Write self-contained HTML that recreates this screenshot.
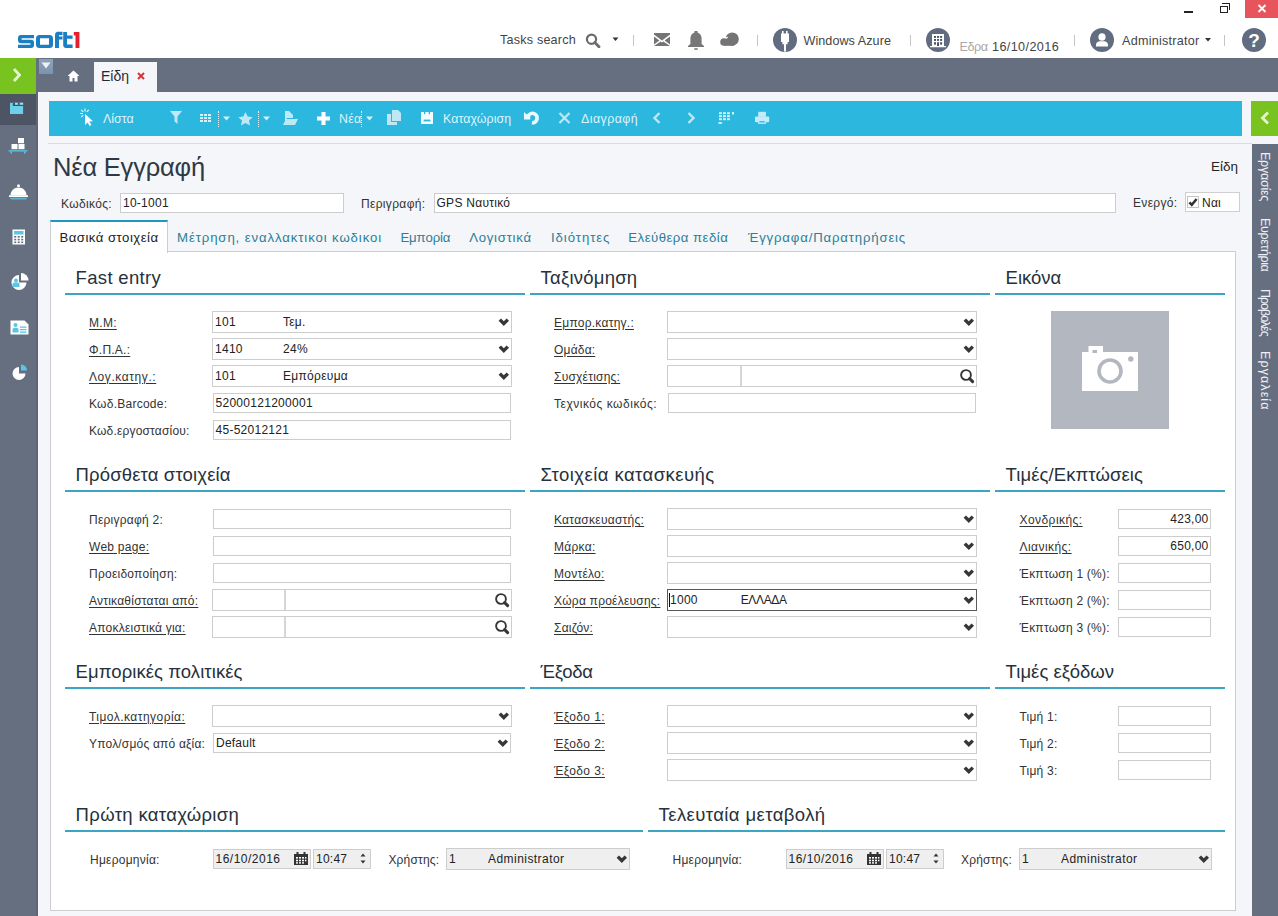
<!DOCTYPE html>
<html><head><meta charset="utf-8">
<style>
*{box-sizing:border-box;margin:0;padding:0}
html,body{width:1278px;height:916px;overflow:hidden;background:#fff;font-family:"Liberation Sans",sans-serif;color:#333;position:relative}
.a{position:absolute}
.t{position:absolute;white-space:nowrap;line-height:1}
.slate{background:#666f80}
.hdr{font-size:12.6px;color:#444}
.sep{position:absolute;width:1px;height:11px;top:35px;background:#c4c4c4}
.circ{position:absolute;width:24px;height:24px;border-radius:50%;background:#626c80;top:28px}
.tb{color:#dff3fa;font-size:12.4px}
.lbl{position:absolute;white-space:nowrap;line-height:1;font-size:12.5px;color:#333}
.u{text-decoration:underline;text-underline-offset:2px}
.inp{position:absolute;height:20px;border:1px solid #cfcfcf;background:#fff}
.sel{position:absolute;height:22px;border:1px solid #cfcfcf;background:#fff}
.val{position:absolute;white-space:nowrap;line-height:1;font-size:12.5px;color:#222}
.h2{position:absolute;white-space:nowrap;line-height:1;font-size:18px;color:#1f2a36}
.ul{position:absolute;height:2px;background:#3aa6c2}
.tab{position:absolute;white-space:nowrap;line-height:1;font-size:13.6px;color:#2b8cb0}
</style></head><body>

<!-- header -->
<svg class="a" style="left:17px;top:31px" width="64" height="18" viewBox="0 0 64 18">
<g fill="#1b7fc3">
<path d="M3 4h14v3.2H4.6v1.6H14a3 3 0 0 1 3 3V14a3 3 0 0 1-3 3H1v-3.2h12.4v-1.6H4a3 3 0 0 1-3-3V7a3 3 0 0 1 3-3z"/>
<path d="M22.5 4h10a3.5 3.5 0 0 1 3.5 3.5v6A3.5 3.5 0 0 1 32.5 17h-10A3.5 3.5 0 0 1 19 13.5v-6A3.5 3.5 0 0 1 22.5 4zM23 7.3v6.4h9V7.3z"/>
<path d="M40 0.8h5.5v3.2H42v1.4h3.5v3H42V17h-4V4A3.2 3.2 0 0 1 40 0.8z"/>
<path d="M46.2 1h3.8v3.6h5.6v3.1H50v5.8h5.6V17h-6.4a3 3 0 0 1-3-3z"/>
</g>
<path fill="#e3202b" d="M56.8 1h5.6V17h-3.9V4.4h-1.7z"/>
</svg>
<!-- window controls -->
<div class="a" style="left:1184px;top:11px;width:9px;height:2px;background:#222"></div>
<div class="a" style="left:1220px;top:6px;width:8px;height:7px;border:1px solid #222"></div>
<div class="a" style="left:1222px;top:3px;width:8px;height:7px;border-top:1px solid #222;border-right:1px solid #222"></div>
<div class="a" style="left:1245px;top:0;width:33px;height:18px;background:#e8545c"></div>
<svg class="a" style="left:1257px;top:4px" width="10" height="9" viewBox="0 0 10 9"><path d="M1.5 1l7 7M8.5 1l-7 7" stroke="#fff" stroke-width="1.8"/></svg>
<!-- header right -->
<div class="t hdr" style="left:500px;top:33.6px;letter-spacing:0.2px">Tasks search</div>
<svg class="a" style="left:585px;top:33px" width="16" height="15" viewBox="0 0 16 15"><circle cx="6.5" cy="6.3" r="4.6" fill="none" stroke="#6b6b6b" stroke-width="2.2"/><path d="M9.8 9.6l4.2 4.2" stroke="#6b6b6b" stroke-width="2.8" stroke-linecap="round"/></svg>
<svg class="a" style="left:612px;top:37px" width="7" height="5" viewBox="0 0 7 5"><path d="M0.5 0.5h6L3.5 4z" fill="#333"/></svg>
<div class="sep" style="left:633px"></div>
<svg class="a" style="left:654px;top:33px" width="16" height="13" viewBox="0 0 16 13"><path d="M0 0h16v1.6L8 7.6 0 1.6z M0 3.4l5.4 4.1L0 11.4z M16 3.4l-5.4 4.1L16 11.4z M0 13l6.6-4.6L8 9.4l1.4-1L16 13z" fill="#747474"/></svg>
<svg class="a" style="left:687px;top:31px" width="18" height="19" viewBox="0 0 18 19"><path d="M9 1.5c-3.6 0-5.6 2.5-5.6 6.5v5L1 15v1h16v-1l-2.4-2V8c0-4-2-6.5-5.6-6.5z" fill="#777"/><rect x="7.2" y="0" width="3.6" height="2" rx="1" fill="#777"/><rect x="7" y="17.3" width="4" height="1.5" rx="0.7" fill="#777"/></svg>
<svg class="a" style="left:719px;top:32px" width="22" height="15" viewBox="0 0 22 15"><g fill="#747474"><circle cx="13.2" cy="7" r="6.6"/><circle cx="5" cy="10" r="3.8"/><rect x="5" y="8" width="10" height="5.8"/></g><path d="M6.6 6.5a4 4 0 0 1 2.2-1.2" stroke="#fff" stroke-width="1.2" fill="none"/></svg>
<div class="sep" style="left:757px"></div>
<div class="circ" style="left:773px"></div>
<svg class="a" style="left:773px;top:28px" width="24" height="24" viewBox="0 0 24 24"><path fill="#fff" d="M9 3h1.6v2.5h2.4V3h1.6v2.5H16V14h-1.4v2.3H13V23.5h-2V16.3H9.4V14H8V5.5h1z"/></svg>
<div class="t hdr" style="left:803.5px;top:34.5px;letter-spacing:0.05px">Windows Azure</div>
<div class="sep" style="left:910px"></div>
<div class="circ" style="left:926px"></div>
<svg class="a" style="left:926px;top:28px" width="24" height="24" viewBox="0 0 24 24"><path fill="#fff" d="M6 6h12v12h1.9v1.2H4.1V18H6z"/><g fill="#4a5366"><rect x="8" y="8" width="2" height="1.9"/><rect x="11.05" y="8" width="2" height="1.9"/><rect x="14.1" y="8" width="2" height="1.9"/><rect x="8" y="11" width="2" height="1.9"/><rect x="11.05" y="11" width="2" height="1.9"/><rect x="14.1" y="11" width="2" height="1.9"/><rect x="8" y="14.2" width="2" height="2.4"/><rect x="11.05" y="14.2" width="2" height="3.8"/><rect x="14.1" y="14.2" width="2" height="2.4"/></g></svg>
<div class="t hdr" style="left:959.5px;top:40.5px;color:#a9a9a9;letter-spacing:-0.4px">Εδρα</div>
<div class="t hdr" style="left:992px;top:40.5px;letter-spacing:0.4px">16/10/2016</div>
<div class="sep" style="left:1074px"></div>
<div class="circ" style="left:1090px"></div>
<svg class="a" style="left:1090px;top:28px" width="24" height="24" viewBox="0 0 24 24"><path fill="#fff" d="M12 5.2a3.6 3.8 0 1 1 0 7.6 3.6 3.8 0 1 1 0-7.6zM6 18.5v-1.6c0-2.4 2-3.6 3.8-3.6h4.4c1.8 0 3.8 1.2 3.8 3.6v1.6z"/></svg>
<div class="t hdr" style="left:1122px;top:34.5px;letter-spacing:0.25px">Administrator</div>
<svg class="a" style="left:1205px;top:38px" width="6" height="4" viewBox="0 0 6 4"><path d="M0 0h6L3 3.5z" fill="#333"/></svg>
<div class="sep" style="left:1224px"></div>
<div class="circ" style="left:1242px"></div>
<div class="t" style="left:1247px;top:31px;width:14px;text-align:center;font-size:19px;font-weight:bold;color:#fff">?</div>

<!-- slate bar -->
<div class="a slate" style="left:0;top:58px;width:1278px;height:34px"></div>
<div class="a slate" style="left:0;top:58px;width:38px;height:858px"></div>
<div class="a" style="left:36px;top:92px;width:2px;height:824px;background:#5d6576"></div>
<div class="a" style="left:0;top:58px;width:36px;height:36px;background:#78c31f"></div>
<div class="a" style="left:0;top:94px;width:36px;height:31px;background:#4d5464"></div>
<svg class="a" style="left:9px;top:101px" width="16" height="14" viewBox="0 0 16 14"><rect x="1" y="1.8" width="13.1" height="11.2" fill="#6ccfec"/><rect x="6" y="1.8" width="2.9" height="2" fill="#a8def0"/><rect x="10.7" y="1.8" width="3.4" height="2" fill="#a8def0"/><g fill="#3f5566"><rect x="3.9" y="1.8" width="2.1" height="3.2"/><rect x="8.9" y="1.8" width="1.8" height="2"/><rect x="3.9" y="3.8" width="10.2" height="1.2"/></g></svg>
<svg class="a" style="left:8px;top:138px" width="20" height="17" viewBox="0 0 20 17"><g fill="#fff"><rect x="10" y="0" width="6" height="5.2"/><rect x="3.5" y="6" width="6" height="5.2"/><rect x="10.5" y="6" width="6" height="5.2"/></g><rect x="0.5" y="12.2" width="19" height="1.3" fill="#5ac6e6"/><rect x="2.5" y="13.5" width="1.5" height="2" fill="#5ac6e6"/><rect x="16" y="13.5" width="1.5" height="2" fill="#5ac6e6"/></svg>
<svg class="a" style="left:9px;top:184px" width="19" height="16" viewBox="0 0 19 16"><circle cx="9.5" cy="1.8" r="1.5" fill="#fff"/><path d="M1.5 11.5C1.5 7 5 3.5 9.5 3.5S17.5 7 17.5 11.5z" fill="#fff"/><rect x="0" y="11.3" width="19" height="1.8" fill="#fff"/><rect x="1.5" y="14.2" width="16" height="1.2" fill="#5ac6e6"/></svg>
<svg class="a" style="left:12px;top:229px" width="14" height="16" viewBox="0 0 14 16"><rect x="0.5" y="0.5" width="12.5" height="15" fill="#fff"/><rect x="2" y="2" width="9.5" height="3.5" fill="#5ac6e6"/><g fill="#666f80"><rect x="2.2" y="7" width="2" height="1.6"/><rect x="5.7" y="7" width="2" height="1.6"/><rect x="9.2" y="7" width="2" height="1.6"/><rect x="2.2" y="9.8" width="2" height="1.6"/><rect x="5.7" y="9.8" width="2" height="1.6"/><rect x="9.2" y="9.8" width="2" height="1.6"/><rect x="2.2" y="12.5" width="2" height="1.6"/><rect x="5.7" y="12.5" width="2" height="1.6"/><rect x="9.2" y="12.5" width="2" height="1.6"/></g></svg>
<svg class="a" style="left:11px;top:272px" width="18" height="18" viewBox="0 0 18 18"><path d="M8 3A7.5 7.5 0 1 0 15.5 10.5H8z" fill="#fff"/><path d="M10 1a7.5 7.5 0 0 1 7.5 7.5H10z" fill="#fff"/><circle cx="5" cy="8.5" r="2" fill="#5ac6e6"/><path d="M1.5 15v-2.5c0-1.2 1-2 2-2h3c1 0 2 .8 2 2V15z" fill="#5ac6e6"/></svg>
<svg class="a" style="left:10px;top:320px" width="19" height="15" viewBox="0 0 19 15"><path d="M0.5 0.5h14l4 4v10h-18z" fill="#fff"/><circle cx="5.5" cy="5" r="2" fill="#5ac6e6"/><path d="M2.5 12.5v-3c0-1 1-1.8 2-1.8h2c1 0 2 .8 2 1.8v3z" fill="#5ac6e6"/><rect x="10" y="6.5" width="6.5" height="1.3" fill="#5ac6e6"/><rect x="10" y="9" width="6.5" height="1.3" fill="#5ac6e6"/><rect x="10" y="11.5" width="6.5" height="1.3" fill="#5ac6e6"/></svg>
<svg class="a" style="left:12px;top:363px" width="17" height="17" viewBox="0 0 17 17"><path d="M7 4A6.5 6.5 0 1 0 13.5 10.5H7z" fill="#fff"/><path d="M9 1.5a6 6 0 0 1 6 6H9z" fill="#5ac6e6"/></svg>

<!-- page bg -->
<div class="a" style="left:38px;top:92px;width:1214px;height:824px;background:#f4f6f9"></div>
<div class="a" style="left:1252px;top:92px;width:26px;height:52px;background:#f4f6f9"></div>
<div class="a slate" style="left:1252px;top:144px;width:26px;height:772px"></div>

<!-- tab -->
<div class="a" style="left:94px;top:62px;width:63px;height:30px;background:#f4f6f9"></div>

<!-- toolbar -->
<div class="a" style="left:49px;top:101px;width:1193px;height:35px;background:#2cb7df"></div>
<div class="a" style="left:1251px;top:101px;width:27px;height:35px;background:#78c31f"></div>
<svg class="a" style="left:1259px;top:111px" width="12" height="14" viewBox="0 0 12 14"><path d="M9 1.5L3.5 7 9 12.5" fill="none" stroke="#e6f5d0" stroke-width="2.8"/></svg>
<svg class="a" style="left:11px;top:67px" width="12" height="16" viewBox="0 0 12 16"><path d="M3 2l5.5 6L3 14" fill="none" stroke="#e6f5d0" stroke-width="2.8"/></svg>
<!-- small dropdown square -->
<div class="a" style="left:39px;top:59px;width:14px;height:15px;background:linear-gradient(#8fa3b9,#7b93ad)"></div>
<svg class="a" style="left:41px;top:62px" width="10" height="7" viewBox="0 0 10 7"><path d="M0.5 0.5h9L5 6.5z" fill="#eef2f6"/></svg>
<!-- home icon -->
<svg class="a" style="left:67px;top:70px" width="13" height="12" viewBox="0 0 13 12"><path d="M6.5 0.5L0.5 6h2v5.5h3V8h2v3.5h3V6h2z" fill="#fff"/></svg>
<!-- tab content -->
<div class="t" style="left:101px;top:69px;font-size:14px;color:#1f2a36">Είδη</div>
<svg class="a" style="left:137px;top:72px" width="8" height="8" viewBox="0 0 8 8"><path d="M1 1l6 6M7 1L1 7" stroke="#d8343a" stroke-width="2"/></svg>
<!-- toolbar icons -->
<svg class="a" style="left:79px;top:108px" width="15" height="19" viewBox="0 0 15 19"><g stroke="#e8f7fc" stroke-width="1.2"><path d="M6 0.5v3M1 5.5h3M2.2 1.8l2 2M9.8 1.8l-2 2M2.2 9.2l2-2"/></g><path d="M6 6l0 11 2.6-2.6 2 3.6 1.8-1-2-3.5 3.6-0.3z" fill="#fff"/></svg>
<div class="t tb" style="left:103px;top:113px">Λίστα</div>
<svg class="a" style="left:170px;top:111px" width="12" height="13" viewBox="0 0 12 13"><path d="M0 0h12L7.5 5.5V13L4.5 10.5V5.5z" fill="#bfe8f5"/></svg>
<svg class="a" style="left:200px;top:114px" width="11" height="8" viewBox="0 0 11 8"><g fill="#d8f1f9"><rect x="0" y="0" width="3" height="2"/><rect x="4" y="0" width="3" height="2"/><rect x="8" y="0" width="3" height="2"/><rect x="0" y="3" width="3" height="2"/><rect x="4" y="3" width="3" height="2"/><rect x="8" y="3" width="3" height="2"/><rect x="0" y="6" width="3" height="2"/><rect x="4" y="6" width="3" height="2"/><rect x="8" y="6" width="3" height="2"/></g></svg>
<div class="a" style="left:218px;top:111px;width:1px;height:16px;border-left:1px dotted #e0f4fb"></div>
<svg class="a" style="left:223px;top:116px" width="7" height="5" viewBox="0 0 7 5"><path d="M0 0.5h7L3.5 4.5z" fill="#d8f1f9"/></svg>
<svg class="a" style="left:238px;top:112px" width="15" height="14" viewBox="0 0 15 14"><path d="M7.5 0l2.2 4.6 5 .6-3.7 3.4 1 4.9-4.5-2.5-4.5 2.5 1-4.9L0.3 5.2l5-.6z" fill="#bfe8f5"/></svg>
<div class="a" style="left:258px;top:111px;width:1px;height:16px;border-left:1px dotted #e0f4fb"></div>
<svg class="a" style="left:263px;top:116px" width="7" height="5" viewBox="0 0 7 5"><path d="M0 0.5h7L3.5 4.5z" fill="#d8f1f9"/></svg>
<svg class="a" style="left:283px;top:111px" width="15" height="14" viewBox="0 0 15 14"><path d="M0 0h6l4 4v3H4L2 11V0z" fill="#bfe8f5"/><path d="M0 14l3-6h12l-3 6z" fill="#bfe8f5"/></svg>
<svg class="a" style="left:317px;top:112px" width="13" height="13" viewBox="0 0 13 13"><path d="M4.5 0h4v4.5H13v4H8.5V13h-4V8.5H0v-4h4.5z" fill="#fff"/></svg>
<div class="t tb" style="left:339px;top:113px;letter-spacing:0.3px">Νέα</div>
<div class="a" style="left:361px;top:111px;width:1px;height:16px;border-left:1px dotted #e0f4fb"></div>
<svg class="a" style="left:366px;top:116px" width="7" height="5" viewBox="0 0 7 5"><path d="M0 0.5h7L3.5 4.5z" fill="#d8f1f9"/></svg>
<svg class="a" style="left:387px;top:110px" width="14" height="15" viewBox="0 0 14 15"><path d="M5 0h6l3 3v8H5z" fill="#bfe8f5"/><path d="M0 4h4v8h6v3H0z" fill="#bfe8f5"/></svg>
<svg class="a" style="left:421px;top:112px" width="12" height="12" viewBox="0 0 12 12"><path d="M0 0h12v12H0z" fill="#f2fbfe"/><rect x="3" y="0" width="1.3" height="2.2" fill="#2cb7df"/><rect x="7.7" y="0" width="1.3" height="2.2" fill="#2cb7df"/><rect x="2.6" y="7.6" width="6.8" height="1.8" fill="#2cb7df"/></svg>
<div class="t tb" style="left:443px;top:113px;letter-spacing:0.1px">Καταχώριση</div>
<svg class="a" style="left:518px;top:106px" width="28" height="24" viewBox="0 0 28 24"><path d="M10.3 9.8A4.7 4.7 0 1 1 13.9 16.7" fill="none" stroke="#e8fafd" stroke-width="3.7"/><path d="M6 6l2.8 2.4 3-1.2 0.6 6.4H6z" fill="#e8fafd"/></svg>
<svg class="a" style="left:558px;top:112px" width="13" height="12" viewBox="0 0 13 12"><path d="M1.5 1l10 10M11.5 1l-10 10" stroke="#bfe8f5" stroke-width="2.2"/></svg>
<div class="t tb" style="left:581px;top:113px;letter-spacing:0.45px">Διαγραφή</div>
<svg class="a" style="left:652px;top:112px" width="10" height="12" viewBox="0 0 10 12"><path d="M7.5 1L2.5 6l5 5" fill="none" stroke="#bfe8f5" stroke-width="2.4"/></svg>
<svg class="a" style="left:686px;top:112px" width="10" height="12" viewBox="0 0 10 12"><path d="M2.5 1l5 5-5 5" fill="none" stroke="#bfe8f5" stroke-width="2.4"/></svg>
<svg class="a" style="left:718px;top:111px" width="17" height="14" viewBox="0 0 17 14"><g fill="#d2f0fa"><rect x="1" y="1.2" width="2.9" height="2"/><rect x="5" y="1.2" width="2.9" height="2"/><rect x="9" y="1.2" width="2.9" height="2"/><rect x="1" y="4.2" width="2.9" height="2"/><rect x="5" y="4.2" width="2.9" height="2"/><rect x="9" y="4.2" width="2.9" height="2"/><rect x="1" y="7.2" width="2.9" height="2"/><rect x="5" y="7.2" width="2.9" height="2"/><rect x="9" y="7.2" width="2.9" height="2"/><path d="M14 1h2v2.4h-2z"/><ellipse cx="2.2" cy="12" rx="2.2" ry="1.1"/></g></svg>
<svg class="a" style="left:755px;top:111px" width="15" height="14" viewBox="0 0 15 14"><g fill="#c4ebf7"><rect x="3.2" y="0.8" width="7.7" height="5"/><rect x="0" y="5.6" width="14.2" height="5.6" rx="1"/><rect x="3.2" y="10.5" width="7.7" height="2.4"/></g><rect x="4.3" y="10.2" width="5.5" height="1.3" fill="#2cb7df"/></svg>
<div class="a" style="left:48px;top:143px;width:1204px;height:1px;background:#d9dde2"></div>

<!-- title -->
<div class="t" style="left:53px;top:155px;font-size:25.5px;letter-spacing:-0.2px;color:#2e3945">Νέα Εγγραφή</div>
<div class="t" style="left:1211px;top:160px;font-size:13.5px;color:#222">Είδη</div>

<!-- white panel -->
<div class="a" style="left:50px;top:251px;width:1186px;height:660px;background:#fff;border:1px solid #cbcdd0"></div>

<!--FORM-->
<div class="t" style="font-size:12.0px;color:#333;letter-spacing:0.35px;left:61.0px;top:198.4px;">Κωδικός:</div>
<div class="a" style="left:120px;top:193px;width:224px;height:20px;border:1px solid #cdcdcd;background:#fff"></div>
<div class="t" style="font-size:12.0px;color:#222;letter-spacing:0.26px;left:123.0px;top:197.4px;">10-1001</div>
<div class="t" style="font-size:12.0px;color:#333;letter-spacing:0.34px;left:361.0px;top:198.4px;">Περιγραφή:</div>
<div class="a" style="left:434px;top:193px;width:682px;height:20px;border:1px solid #cdcdcd;background:#fff"></div>
<div class="t" style="font-size:12.0px;color:#222;letter-spacing:0.27px;left:436.5px;top:197.4px;">GPS Ναυτικό</div>
<div class="t" style="font-size:12.0px;color:#333;letter-spacing:0.32px;left:1133.0px;top:197.4px;">Ενεργό:</div>
<div class="a" style="left:1185px;top:192px;width:55px;height:20px;border:1px solid #cfcfcf;background:#fff"></div>
<div class="a" style="left:1187px;top:196px;width:12px;height:12px;border:1px solid #c4c4c4;background:#fff"></div>
<svg class="a" style="left:1188px;top:197px" width="10" height="10" viewBox="0 0 10 10"><path d="M1.4 5.3l2.4 2.6L8.6 2" fill="none" stroke="#333" stroke-width="2.5"/></svg>
<div class="t" style="font-size:12.0px;color:#222;letter-spacing:0.25px;left:1202.0px;top:196.6px;">Ναι</div>
<div class="a" style="left:50px;top:220px;width:118px;height:33px;background:#fff;border-left:1px solid #cbcdd0;border-right:1px solid #cbcdd0;border-top:2px solid #1f97c0"></div>
<div class="t" style="font-size:13.2px;color:#222;letter-spacing:0.47px;left:59.5px;top:231.3px;">Βασικά στοιχεία</div>
<div class="t" style="font-size:13.2px;color:#2a7f98;letter-spacing:0.89px;left:177.0px;top:231.3px;">Μέτρηση, εναλλακτικοι κωδικοι</div>
<div class="t" style="font-size:13.2px;color:#2a7f98;letter-spacing:-0.10px;left:400.4px;top:231.3px;">Εμπορία</div>
<div class="t" style="font-size:13.2px;color:#2a7f98;letter-spacing:0.73px;left:469.2px;top:231.3px;">Λογιστικά</div>
<div class="t" style="font-size:13.2px;color:#2a7f98;letter-spacing:0.92px;left:551.0px;top:231.3px;">Ιδιότητες</div>
<div class="t" style="font-size:13.2px;color:#2a7f98;letter-spacing:0.47px;left:628.3px;top:231.3px;">Ελεύθερα πεδία</div>
<div class="t" style="font-size:13.2px;color:#2a7f98;letter-spacing:0.83px;left:748.0px;top:231.3px;">Έγγραφα/Παρατηρήσεις</div>
<div class="ul" style="left:65px;top:293px;width:460px"></div>
<div class="t" style="font-size:18.5px;color:#26313c;letter-spacing:0.33px;left:75.6px;top:269.4px;">Fast entry</div>
<div class="ul" style="left:530px;top:293px;width:460px"></div>
<div class="t" style="font-size:18.5px;color:#26313c;letter-spacing:0.22px;left:540.6px;top:269.4px;">Ταξινόμηση</div>
<div class="ul" style="left:995px;top:293px;width:230px"></div>
<div class="t" style="font-size:18.5px;color:#26313c;letter-spacing:-0.04px;left:1005.6px;top:269.4px;">Εικόνα</div>
<div class="ul" style="left:65px;top:490px;width:460px"></div>
<div class="t" style="font-size:18.5px;color:#26313c;letter-spacing:0.14px;left:75.6px;top:466.4px;">Πρόσθετα στοιχεία</div>
<div class="ul" style="left:530px;top:490px;width:460px"></div>
<div class="t" style="font-size:18.5px;color:#26313c;letter-spacing:0.44px;left:540.6px;top:466.4px;">Στοιχεία κατασκευής</div>
<div class="ul" style="left:995px;top:490px;width:230px"></div>
<div class="t" style="font-size:18.5px;color:#26313c;letter-spacing:0.08px;left:1005.6px;top:466.4px;">Τιμές/Εκπτώσεις</div>
<div class="ul" style="left:65px;top:687px;width:460px"></div>
<div class="t" style="font-size:18.5px;color:#26313c;letter-spacing:0.07px;left:75.6px;top:663.4px;">Εμπορικές πολιτικές</div>
<div class="ul" style="left:530px;top:687px;width:460px"></div>
<div class="t" style="font-size:18.5px;color:#26313c;letter-spacing:-0.32px;left:540.6px;top:663.4px;">Έξοδα</div>
<div class="ul" style="left:995px;top:687px;width:230px"></div>
<div class="t" style="font-size:18.5px;color:#26313c;letter-spacing:0.04px;left:1005.6px;top:663.4px;">Τιμές εξόδων</div>
<div class="ul" style="left:65px;top:830px;width:578px"></div>
<div class="t" style="font-size:18.5px;color:#26313c;letter-spacing:0.33px;left:75.6px;top:806.4px;">Πρώτη καταχώριση</div>
<div class="ul" style="left:648px;top:830px;width:577px"></div>
<div class="t" style="font-size:18.5px;color:#26313c;letter-spacing:0.41px;left:658.6px;top:806.4px;">Τελευταία μεταβολή</div>
<div class="t u" style="font-size:12.0px;color:#333;letter-spacing:0.28px;left:89.0px;top:316.6px;">Μ.Μ:</div>
<div class="a" style="left:212px;top:311px;width:300px;height:22px;border:1px solid #cdcdcd;background:#fff"></div>
<svg class="a" style="left:498px;top:318px" width="12" height="9" viewBox="0 0 12 9"><path d="M0.6 2.8L3 0.4 5.8 3.2 8.6 0.4 11 2.8 5.8 8z" fill="#373737"/></svg>
<div class="t" style="font-size:12.0px;color:#222;letter-spacing:0.28px;left:215.0px;top:316.4px;">101</div>
<div class="t" style="font-size:12.0px;color:#222;letter-spacing:0.23px;left:283.0px;top:316.4px;">Τεμ.</div>
<div class="t u" style="font-size:12.0px;color:#333;letter-spacing:0.24px;left:89.0px;top:343.6px;">Φ.Π.Α.:</div>
<div class="a" style="left:212px;top:338px;width:300px;height:22px;border:1px solid #cdcdcd;background:#fff"></div>
<svg class="a" style="left:498px;top:345px" width="12" height="9" viewBox="0 0 12 9"><path d="M0.6 2.8L3 0.4 5.8 3.2 8.6 0.4 11 2.8 5.8 8z" fill="#373737"/></svg>
<div class="t" style="font-size:12.0px;color:#222;letter-spacing:0.28px;left:215.0px;top:343.4px;">1410</div>
<div class="t" style="font-size:12.0px;color:#222;letter-spacing:0.33px;left:283.0px;top:343.4px;">24%</div>
<div class="t u" style="font-size:12.0px;color:#333;letter-spacing:0.58px;left:89.0px;top:370.6px;">Λογ.κατηγ.:</div>
<div class="a" style="left:212px;top:365px;width:300px;height:22px;border:1px solid #cdcdcd;background:#fff"></div>
<svg class="a" style="left:498px;top:372px" width="12" height="9" viewBox="0 0 12 9"><path d="M0.6 2.8L3 0.4 5.8 3.2 8.6 0.4 11 2.8 5.8 8z" fill="#373737"/></svg>
<div class="t" style="font-size:12.0px;color:#222;letter-spacing:0.28px;left:215.0px;top:370.4px;">101</div>
<div class="t" style="font-size:12.0px;color:#222;letter-spacing:0.29px;left:283.0px;top:370.4px;">Εμπόρευμα</div>
<div class="t" style="font-size:12.0px;color:#333;letter-spacing:0.25px;left:89.0px;top:397.6px;">Κωδ.Barcode:</div>
<div class="a" style="left:213px;top:393px;width:298px;height:20px;border:1px solid #cdcdcd;background:#fff"></div>
<div class="t" style="font-size:12.0px;color:#222;letter-spacing:0.28px;left:215.5px;top:397.4px;">52000121200001</div>
<div class="t" style="font-size:12.0px;color:#333;letter-spacing:0.18px;left:89.0px;top:424.6px;">Κωδ.εργοστασίου:</div>
<div class="a" style="left:213px;top:420px;width:298px;height:20px;border:1px solid #cdcdcd;background:#fff"></div>
<div class="t" style="font-size:12.0px;color:#222;letter-spacing:0.27px;left:215.5px;top:424.4px;">45-52012121</div>
<div class="t u" style="font-size:12.0px;color:#333;letter-spacing:0.25px;left:554.0px;top:316.6px;">Εμπορ.κατηγ.:</div>
<div class="a" style="left:667px;top:311px;width:310px;height:22px;border:1px solid #cdcdcd;background:#fff"></div>
<svg class="a" style="left:963px;top:318px" width="12" height="9" viewBox="0 0 12 9"><path d="M0.6 2.8L3 0.4 5.8 3.2 8.6 0.4 11 2.8 5.8 8z" fill="#373737"/></svg>
<div class="t u" style="font-size:12.0px;color:#333;letter-spacing:0.19px;left:554.0px;top:343.6px;">Ομάδα:</div>
<div class="a" style="left:667px;top:338px;width:310px;height:22px;border:1px solid #cdcdcd;background:#fff"></div>
<svg class="a" style="left:963px;top:345px" width="12" height="9" viewBox="0 0 12 9"><path d="M0.6 2.8L3 0.4 5.8 3.2 8.6 0.4 11 2.8 5.8 8z" fill="#373737"/></svg>
<div class="t u" style="font-size:12.0px;color:#333;letter-spacing:0.23px;left:554.0px;top:370.6px;">Συσχέτισης:</div>
<div class="a" style="left:667px;top:365px;width:310px;height:22px;border:1px solid #cdcdcd;background:#fff"></div>
<div class="a" style="left:740px;top:366px;width:2px;height:20px;background:#d6d6d6"></div>
<svg class="a" style="left:960px;top:369px" width="15" height="15" viewBox="0 0 15 15"><circle cx="6" cy="6" r="4.9" fill="none" stroke="#363636" stroke-width="1.9"/><path d="M9.6 9.6l3 3" stroke="#363636" stroke-width="3" stroke-linecap="round"/></svg>
<div class="t" style="font-size:12.0px;color:#333;letter-spacing:0.53px;left:554.0px;top:397.6px;">Τεχνικός κωδικός:</div>
<div class="a" style="left:668px;top:393px;width:308px;height:20px;border:1px solid #cdcdcd;background:#fff"></div>
<div class="a" style="left:1051px;top:311px;width:118px;height:118px;background:#b3b8c0"></div>
<svg class="a" style="left:1082px;top:345px" width="58" height="47" viewBox="0 0 58 47"><path fill="#fff" d="M6.5 1h14.5v6H56v39H0V7h6.5z"/><rect x="10.5" y="5" width="4.5" height="3" fill="#b3b8c0"/><circle cx="28" cy="26" r="11" fill="none" stroke="#b3b8c0" stroke-width="3.6"/><circle cx="48.8" cy="14" r="2.7" fill="#b3b8c0"/></svg>
<div class="t" style="font-size:12.0px;color:#333;letter-spacing:0.25px;left:89.0px;top:513.6px;">Περιγραφή 2:</div>
<div class="a" style="left:213px;top:509px;width:298px;height:20px;border:1px solid #cdcdcd;background:#fff"></div>
<div class="t u" style="font-size:12.0px;color:#333;letter-spacing:0.27px;left:89.0px;top:540.6px;">Web page:</div>
<div class="a" style="left:213px;top:536px;width:298px;height:20px;border:1px solid #cdcdcd;background:#fff"></div>
<div class="t" style="font-size:12.0px;color:#333;letter-spacing:0.25px;left:89.0px;top:567.6px;">Προειδοποίηση:</div>
<div class="a" style="left:213px;top:563px;width:298px;height:20px;border:1px solid #cdcdcd;background:#fff"></div>
<div class="t u" style="font-size:12.0px;color:#333;letter-spacing:0.23px;left:89.0px;top:594.6px;">Αντικαθίσταται από:</div>
<div class="a" style="left:212px;top:589px;width:300px;height:22px;border:1px solid #cdcdcd;background:#fff"></div>
<div class="a" style="left:284px;top:590px;width:2px;height:20px;background:#d6d6d6"></div>
<svg class="a" style="left:495px;top:593px" width="15" height="15" viewBox="0 0 15 15"><circle cx="6" cy="6" r="4.9" fill="none" stroke="#363636" stroke-width="1.9"/><path d="M9.6 9.6l3 3" stroke="#363636" stroke-width="3" stroke-linecap="round"/></svg>
<div class="t u" style="font-size:12.0px;color:#333;letter-spacing:0.23px;left:89.0px;top:621.6px;">Αποκλειστικά για:</div>
<div class="a" style="left:212px;top:616px;width:300px;height:22px;border:1px solid #cdcdcd;background:#fff"></div>
<div class="a" style="left:284px;top:617px;width:2px;height:20px;background:#d6d6d6"></div>
<svg class="a" style="left:495px;top:620px" width="15" height="15" viewBox="0 0 15 15"><circle cx="6" cy="6" r="4.9" fill="none" stroke="#363636" stroke-width="1.9"/><path d="M9.6 9.6l3 3" stroke="#363636" stroke-width="3" stroke-linecap="round"/></svg>
<div class="t u" style="font-size:12.0px;color:#333;letter-spacing:0.26px;left:554.0px;top:513.6px;">Κατασκευαστής:</div>
<div class="a" style="left:667px;top:508px;width:310px;height:22px;border:1px solid #cdcdcd;background:#fff"></div>
<svg class="a" style="left:963px;top:515px" width="12" height="9" viewBox="0 0 12 9"><path d="M0.6 2.8L3 0.4 5.8 3.2 8.6 0.4 11 2.8 5.8 8z" fill="#373737"/></svg>
<div class="t u" style="font-size:12.0px;color:#333;letter-spacing:0.28px;left:554.0px;top:540.6px;">Μάρκα:</div>
<div class="a" style="left:667px;top:535px;width:310px;height:22px;border:1px solid #cdcdcd;background:#fff"></div>
<svg class="a" style="left:963px;top:542px" width="12" height="9" viewBox="0 0 12 9"><path d="M0.6 2.8L3 0.4 5.8 3.2 8.6 0.4 11 2.8 5.8 8z" fill="#373737"/></svg>
<div class="t u" style="font-size:12.0px;color:#333;letter-spacing:0.25px;left:554.0px;top:567.6px;">Μοντέλο:</div>
<div class="a" style="left:667px;top:562px;width:310px;height:22px;border:1px solid #cdcdcd;background:#fff"></div>
<svg class="a" style="left:963px;top:569px" width="12" height="9" viewBox="0 0 12 9"><path d="M0.6 2.8L3 0.4 5.8 3.2 8.6 0.4 11 2.8 5.8 8z" fill="#373737"/></svg>
<div class="t u" style="font-size:12.0px;color:#333;letter-spacing:0.23px;left:554.0px;top:594.6px;">Χώρα προέλευσης:</div>
<div class="a" style="left:667px;top:589px;width:310px;height:22px;border:1px solid #5a5a5a;background:#fff"></div>
<svg class="a" style="left:963px;top:596px" width="12" height="9" viewBox="0 0 12 9"><path d="M0.6 2.8L3 0.4 5.8 3.2 8.6 0.4 11 2.8 5.8 8z" fill="#373737"/></svg>
<div class="t" style="font-size:12.0px;color:#222;letter-spacing:0.28px;left:670.0px;top:594.4px;">1000</div>
<div class="t" style="font-size:12.0px;color:#222;letter-spacing:-0.34px;left:740.7px;top:594.4px;">ΕΛΛΑΔΑ</div>
<div class="a" style="left:669px;top:593px;width:1px;height:14px;background:#111"></div>
<div class="t u" style="font-size:12.0px;color:#333;letter-spacing:0.22px;left:554.0px;top:621.6px;">Σαιζόν:</div>
<div class="a" style="left:667px;top:616px;width:310px;height:22px;border:1px solid #cdcdcd;background:#fff"></div>
<svg class="a" style="left:963px;top:623px" width="12" height="9" viewBox="0 0 12 9"><path d="M0.6 2.8L3 0.4 5.8 3.2 8.6 0.4 11 2.8 5.8 8z" fill="#373737"/></svg>
<div class="t u" style="font-size:12.0px;color:#333;letter-spacing:0.44px;left:1019.5px;top:513.6px;">Χονδρικής:</div>
<div class="a" style="left:1118px;top:509px;width:93px;height:20px;border:1px solid #cdcdcd;background:#fff"></div>
<div class="t" style="font-size:12.0px;color:#222;letter-spacing:0.25px;right:69.5px;top:513.4px;">423,00</div>
<div class="t u" style="font-size:12.0px;color:#333;letter-spacing:0.44px;left:1019.5px;top:540.6px;">Λιανικής:</div>
<div class="a" style="left:1118px;top:536px;width:93px;height:20px;border:1px solid #cdcdcd;background:#fff"></div>
<div class="t" style="font-size:12.0px;color:#222;letter-spacing:0.25px;right:69.5px;top:540.4px;">650,00</div>
<div class="t" style="font-size:12.0px;color:#333;letter-spacing:0.23px;left:1019.5px;top:567.6px;">Έκπτωση 1 (%):</div>
<div class="a" style="left:1118px;top:563px;width:93px;height:20px;border:1px solid #cdcdcd;background:#fff"></div>
<div class="t" style="font-size:12.0px;color:#333;letter-spacing:0.23px;left:1019.5px;top:594.6px;">Έκπτωση 2 (%):</div>
<div class="a" style="left:1118px;top:590px;width:93px;height:20px;border:1px solid #cdcdcd;background:#fff"></div>
<div class="t" style="font-size:12.0px;color:#333;letter-spacing:0.23px;left:1019.5px;top:621.6px;">Έκπτωση 3 (%):</div>
<div class="a" style="left:1118px;top:617px;width:93px;height:20px;border:1px solid #cdcdcd;background:#fff"></div>
<div class="t u" style="font-size:12.0px;color:#333;letter-spacing:0.46px;left:89.0px;top:710.6px;">Τιμολ.κατηγορία:</div>
<div class="a" style="left:212px;top:705px;width:300px;height:22px;border:1px solid #cdcdcd;background:#fff"></div>
<svg class="a" style="left:498px;top:712px" width="12" height="9" viewBox="0 0 12 9"><path d="M0.6 2.8L3 0.4 5.8 3.2 8.6 0.4 11 2.8 5.8 8z" fill="#373737"/></svg>
<div class="t" style="font-size:12.0px;color:#333;letter-spacing:0.19px;left:89.0px;top:737.6px;">Υπολ/σμός από αξία:</div>
<div class="a" style="left:213px;top:733px;width:298px;height:20px;border:1px solid #cdcdcd;background:#fff"></div>
<svg class="a" style="left:497px;top:739px" width="12" height="9" viewBox="0 0 12 9"><path d="M0.6 2.8L3 0.4 5.8 3.2 8.6 0.4 11 2.8 5.8 8z" fill="#373737"/></svg>
<div class="t" style="font-size:12.0px;color:#222;letter-spacing:0.23px;left:216.0px;top:737.4px;">Default</div>
<div class="t u" style="font-size:12.0px;color:#333;letter-spacing:0.39px;left:554.0px;top:710.6px;">Έξοδο 1:</div>
<div class="a" style="left:667px;top:705px;width:310px;height:22px;border:1px solid #cdcdcd;background:#fff"></div>
<svg class="a" style="left:963px;top:712px" width="12" height="9" viewBox="0 0 12 9"><path d="M0.6 2.8L3 0.4 5.8 3.2 8.6 0.4 11 2.8 5.8 8z" fill="#373737"/></svg>
<div class="t u" style="font-size:12.0px;color:#333;letter-spacing:0.39px;left:554.0px;top:737.6px;">Έξοδο 2:</div>
<div class="a" style="left:667px;top:732px;width:310px;height:22px;border:1px solid #cdcdcd;background:#fff"></div>
<svg class="a" style="left:963px;top:739px" width="12" height="9" viewBox="0 0 12 9"><path d="M0.6 2.8L3 0.4 5.8 3.2 8.6 0.4 11 2.8 5.8 8z" fill="#373737"/></svg>
<div class="t u" style="font-size:12.0px;color:#333;letter-spacing:0.39px;left:554.0px;top:764.6px;">Έξοδο 3:</div>
<div class="a" style="left:667px;top:759px;width:310px;height:22px;border:1px solid #cdcdcd;background:#fff"></div>
<svg class="a" style="left:963px;top:766px" width="12" height="9" viewBox="0 0 12 9"><path d="M0.6 2.8L3 0.4 5.8 3.2 8.6 0.4 11 2.8 5.8 8z" fill="#373737"/></svg>
<div class="t" style="font-size:12.0px;color:#333;letter-spacing:0.22px;left:1019.5px;top:710.6px;">Τιμή 1:</div>
<div class="a" style="left:1118px;top:706px;width:93px;height:20px;border:1px solid #cdcdcd;background:#fff"></div>
<div class="t" style="font-size:12.0px;color:#333;letter-spacing:0.22px;left:1019.5px;top:737.6px;">Τιμή 2:</div>
<div class="a" style="left:1118px;top:733px;width:93px;height:20px;border:1px solid #cdcdcd;background:#fff"></div>
<div class="t" style="font-size:12.0px;color:#333;letter-spacing:0.22px;left:1019.5px;top:764.6px;">Τιμή 3:</div>
<div class="a" style="left:1118px;top:760px;width:93px;height:20px;border:1px solid #cdcdcd;background:#fff"></div>
<div class="t" style="font-size:12.0px;color:#333;letter-spacing:0.25px;left:90.0px;top:854.4px;">Ημερομηνία:</div>
<div class="a" style="left:213px;top:849px;width:98px;height:20px;border:1px solid #cdcdcd;background:#efefef"></div>
<div class="t" style="font-size:12.0px;color:#222;letter-spacing:0.49px;left:215.5px;top:853.4px;">16/10/2016</div>
<svg class="a" style="left:294px;top:852px" width="14" height="13" viewBox="0 0 14 13"><path fill="#333" d="M0 2h2.5V0h2v2h5V0h2v2H14v11H0z"/><g fill="#fff"><rect x="2" y="5" width="2" height="1.6"/><rect x="5" y="5" width="2" height="1.6"/><rect x="8" y="5" width="2" height="1.6"/><rect x="11" y="5" width="1.4" height="1.6"/><rect x="2" y="7.7" width="2" height="1.6"/><rect x="5" y="7.7" width="2" height="1.6"/><rect x="8" y="7.7" width="2" height="1.6"/><rect x="11" y="7.7" width="1.4" height="1.6"/><rect x="2" y="10.2" width="2" height="1.4"/><rect x="5" y="10.2" width="2" height="1.4"/><rect x="8" y="10.2" width="2" height="1.4"/></g></svg>
<div class="a" style="left:313px;top:849px;width:58px;height:20px;border:1px solid #cdcdcd;background:#efefef"></div>
<div class="t" style="font-size:12.0px;color:#222;letter-spacing:0.25px;left:316.0px;top:853.4px;">10:47</div>
<svg class="a" style="left:360px;top:853px" width="6" height="11" viewBox="0 0 6 11"><path d="M3 0.5L5.5 3.5h-5zM3 10.5L5.5 7.5h-5z" fill="#333"/></svg>
<div class="t" style="font-size:12.0px;color:#333;letter-spacing:0.19px;left:388.4px;top:854.4px;">Χρήστης:</div>
<div class="a" style="left:446px;top:848px;width:184px;height:22px;border:1px solid #cdcdcd;background:#efefef"></div>
<svg class="a" style="left:616px;top:855px" width="12" height="9" viewBox="0 0 12 9"><path d="M0.6 2.8L3 0.4 5.8 3.2 8.6 0.4 11 2.8 5.8 8z" fill="#373737"/></svg>
<div class="t" style="font-size:12.0px;color:#222;letter-spacing:0.28px;left:449.0px;top:853.4px;">1</div>
<div class="t" style="font-size:12.0px;color:#222;letter-spacing:0.45px;left:488.0px;top:853.4px;">Administrator</div>
<div class="t" style="font-size:12.0px;color:#333;letter-spacing:0.25px;left:672.5px;top:854.4px;">Ημερομηνία:</div>
<div class="a" style="left:786px;top:849px;width:98px;height:20px;border:1px solid #cdcdcd;background:#efefef"></div>
<div class="t" style="font-size:12.0px;color:#222;letter-spacing:0.49px;left:788.5px;top:853.4px;">16/10/2016</div>
<svg class="a" style="left:867px;top:852px" width="14" height="13" viewBox="0 0 14 13"><path fill="#333" d="M0 2h2.5V0h2v2h5V0h2v2H14v11H0z"/><g fill="#fff"><rect x="2" y="5" width="2" height="1.6"/><rect x="5" y="5" width="2" height="1.6"/><rect x="8" y="5" width="2" height="1.6"/><rect x="11" y="5" width="1.4" height="1.6"/><rect x="2" y="7.7" width="2" height="1.6"/><rect x="5" y="7.7" width="2" height="1.6"/><rect x="8" y="7.7" width="2" height="1.6"/><rect x="11" y="7.7" width="1.4" height="1.6"/><rect x="2" y="10.2" width="2" height="1.4"/><rect x="5" y="10.2" width="2" height="1.4"/><rect x="8" y="10.2" width="2" height="1.4"/></g></svg>
<div class="a" style="left:886px;top:849px;width:58px;height:20px;border:1px solid #cdcdcd;background:#efefef"></div>
<div class="t" style="font-size:12.0px;color:#222;letter-spacing:0.25px;left:889.0px;top:853.4px;">10:47</div>
<svg class="a" style="left:933px;top:853px" width="6" height="11" viewBox="0 0 6 11"><path d="M3 0.5L5.5 3.5h-5zM3 10.5L5.5 7.5h-5z" fill="#333"/></svg>
<div class="t" style="font-size:12.0px;color:#333;letter-spacing:0.19px;left:961.0px;top:854.4px;">Χρήστης:</div>
<div class="a" style="left:1019px;top:848px;width:193px;height:22px;border:1px solid #cdcdcd;background:#efefef"></div>
<svg class="a" style="left:1198px;top:855px" width="12" height="9" viewBox="0 0 12 9"><path d="M0.6 2.8L3 0.4 5.8 3.2 8.6 0.4 11 2.8 5.8 8z" fill="#373737"/></svg>
<div class="t" style="font-size:12.0px;color:#222;letter-spacing:0.28px;left:1022.0px;top:853.4px;">1</div>
<div class="t" style="font-size:12.0px;color:#222;letter-spacing:0.45px;left:1061.0px;top:853.4px;">Administrator</div>
<div class="t" style="font-size:12.5px;color:#eef1f5;letter-spacing:-0.25px;left:1264.0px;top:152.0px;transform-origin:0 0;transform:rotate(90deg) translate(0,-6.9px);">Εργασίες</div>
<div class="t" style="font-size:12.5px;color:#eef1f5;letter-spacing:-0.38px;left:1264.0px;top:218.0px;transform-origin:0 0;transform:rotate(90deg) translate(0,-6.9px);">Ευρετήρια</div>
<div class="t" style="font-size:12.5px;color:#eef1f5;letter-spacing:-1.02px;left:1264.0px;top:289.0px;transform-origin:0 0;transform:rotate(90deg) translate(0,-6.9px);">Προβολές</div>
<div class="t" style="font-size:12.5px;color:#eef1f5;letter-spacing:1.10px;left:1264.0px;top:351.0px;transform-origin:0 0;transform:rotate(90deg) translate(0,-6.9px);">Εργαλεία</div>
<!--/FORM-->
</body></html>
